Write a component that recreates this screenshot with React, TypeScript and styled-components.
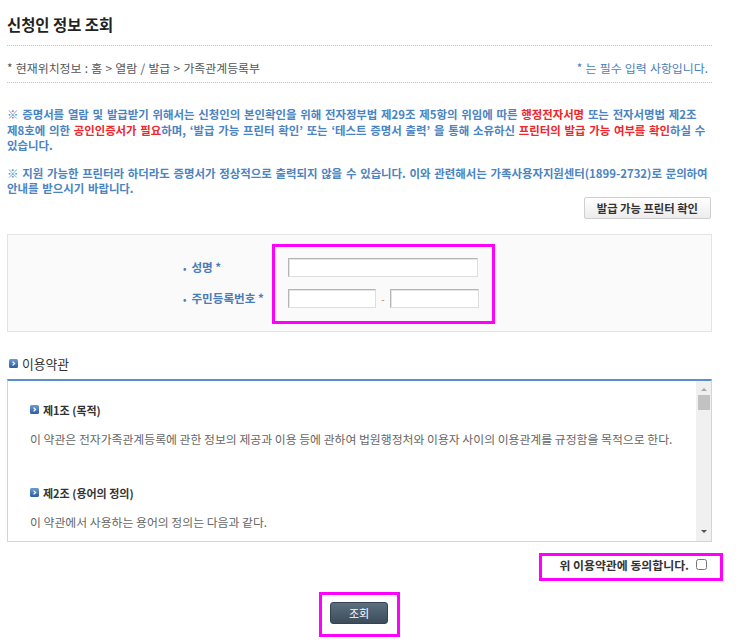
import React from 'react';
import styled, { createGlobalStyle } from 'styled-components';

const GlobalStyle = createGlobalStyle`
  body {
    margin: 0;
    background: #fff;
    font-family: "Noto Sans CJK KR", "Noto Sans", sans-serif;
    color: #333;
  }
`;

const Page = styled.div`
  width: 705px;
  padding: 14px 0 4px 7px;
`;

const Title = styled.h1`
  margin: 0;
  padding-bottom: 11px;
  border-bottom: 1px dotted #c4c4c4;
  font-size: 15.4px;
  line-height: 20px;
  font-weight: 700;
  color: #222;
`;

const LocationBar = styled.div`
  display: flex;
  justify-content: space-between;
  padding: 14px 4px 6px 0;
  border-bottom: 1px dotted #c4c4c4;
  font-size: 11.9px;
  line-height: 16px;
  color: #555;
  word-spacing: 0.6px;
`;

const RequiredNote = styled.span`
  color: #4a7db8;
`;

const Notice = styled.p<{ $gap: number }>`
  margin: ${({ $gap }) => $gap}px 0 0;
  font-size: 11.4px;
  line-height: 15.5px;
  font-weight: 700;
  color: #4a84c2;
  white-space: nowrap;
  word-spacing: 1.2px;
`;

const Red = styled.span`
  color: #f0262b;
`;

const ButtonRow = styled.div`
  display: flex;
  justify-content: flex-end;
  padding-right: 1px;
`;

const GrayButton = styled.button`
  height: 22px;
  padding: 0 12px;
  border: 1px solid #cfcfcf;
  border-radius: 2px;
  background: linear-gradient(#ffffff, #ececec);
  font-family: inherit;
  font-size: 11.3px;
  font-weight: 700;
  color: #333;
  cursor: pointer;
`;

const FormBox = styled.div`
  display: flex;
  margin-top: 15px;
  padding: 9px 0 7px 173px;
  border: 1px solid #e3e3e3;
  background: #fafafa;
`;

const LabelColumn = styled.div`
  display: flex;
  flex-direction: column;
  gap: 12px;
  width: 91px;
  padding-top: 14px;
`;

const FieldLabel = styled.label`
  height: 19px;
  font-size: 11.6px;
  line-height: 19px;
  font-weight: 700;
  color: #4a7db8;
  white-space: nowrap;

  &::before {
    content: '•';
    margin: 0 5px 0 2px;
    font-size: 9px;
  }
`;

const Highlight = styled.div`
  border: 3px solid #ff00ff;
`;

const FieldStack = styled(Highlight)`
  display: flex;
  flex-direction: column;
  gap: 12px;
  padding: 11px 13px 13px;
`;

const FieldRow = styled.div`
  display: flex;
  align-items: center;
  width: 191px;
`;

const TextInput = styled.input<{ $width: number }>`
  box-sizing: border-box;
  width: ${({ $width }) => $width}px;
  height: 19px;
  padding: 0 3px;
  border: 1px solid #b5b5b5;
  border-right-color: #dedede;
  border-bottom-color: #dedede;
  box-shadow: inset 1px 1px 0 #e4e4e4;
  background: #fff;
  font-family: inherit;
  font-size: 11px;
  outline: none;
`;

const Dash = styled.span`
  width: 14px;
  text-align: center;
  font-size: 10px;
  color: #c07a3a;
`;

const SectionHeading = styled.h2`
  display: flex;
  align-items: center;
  gap: 4px;
  margin: 24px 0 7px 2px;
  font-size: 12.8px;
  line-height: 16px;
  font-weight: 400;
  color: #333;
`;

const TermsBox = styled.div`
  display: flex;
  height: 163px;
  box-sizing: border-box;
  border: 1px solid #c4d8ec;
  border-top: 2px solid #5b8fcb;
`;

const TermsBody = styled.div`
  flex: 1;
  overflow: hidden;
  padding: 21px 0 0 22px;
`;

const ScrollTrack = styled.div`
  display: flex;
  flex-direction: column;
  align-items: center;
  width: 15px;
  background: #f0f0f0;
`;

const ScrollArrow = styled.span<{ $down?: boolean }>`
  width: 0;
  height: 0;
  margin: ${({ $down }) => ($down ? '0 0 8px' : '7px 0 4px')};
  border-left: 3px solid transparent;
  border-right: 3px solid transparent;
  ${({ $down }) =>
    $down ? 'border-top: 3px solid #505050;' : 'border-bottom: 3px solid #a8a8a8;'}
`;

const ScrollThumb = styled.div`
  width: 12px;
  height: 15px;
  background: #c2c2c2;
`;

const ScrollSpace = styled.div`
  flex: 1;
`;

const Article = styled.div`
  margin-bottom: 38px;
`;

const ArticleTitle = styled.h3`
  display: flex;
  align-items: center;
  gap: 4px;
  margin: 0 0 13px;
  font-size: 11px;
  line-height: 16px;
  font-weight: 700;
  color: #333;
`;

const ArticleText = styled.p`
  margin: 0;
  font-size: 11.85px;
  line-height: 16px;
  color: #666;
  white-space: nowrap;
`;

const AgreeRow = styled.div`
  display: flex;
  justify-content: flex-end;
  margin: 11px -11px 0 0;
`;

const AgreeBox = styled(Highlight)`
  display: flex;
  align-items: center;
  gap: 7px;
  height: 18px;
  padding: 0 13px 4px 17px;
  font-size: 11.9px;
  font-weight: 700;
  color: #333;
`;

const CheckBox = styled.input`
  width: 11px;
  height: 11px;
  margin: 0;
`;

const SubmitRow = styled.div`
  display: flex;
  justify-content: center;
  margin-top: 11px;
`;

const SubmitBox = styled(Highlight)`
  padding: 7px 9px 10px 8px;
`;

const SubmitButton = styled.button`
  display: block;
  width: 58px;
  height: 22px;
  padding: 0;
  border: 1px solid #34434f;
  border-radius: 3px;
  background: linear-gradient(#5c6f7f, #3c4c5a);
  font-family: inherit;
  font-size: 11px;
  line-height: 20px;
  color: #fff;
  cursor: pointer;
`;

function BulletIcon() {
  return (
    <svg width="9" height="9" viewBox="0 0 9 9">
      <defs>
        <linearGradient id="bi" x1="0" y1="0" x2="0" y2="1">
          <stop offset="0" stopColor="#6a9ad6" />
          <stop offset="1" stopColor="#2c5e9e" />
        </linearGradient>
      </defs>
      <rect x="0" y="0" width="9" height="9" rx="1.5" fill="url(#bi)" />
      <path d="M3.6 2.6 L5.6 4.5 L3.6 6.4" fill="none" stroke="#fff" strokeWidth="1.3" />
    </svg>
  );
}

const articles = [
  {
    title: '제1조 (목적)',
    text: '이 약관은 전자가족관계등록에 관한 정보의 제공과 이용 등에 관하여 법원행정처와 이용자 사이의 이용관계를 규정함을 목적으로 한다.',
  },
  {
    title: '제2조 (용어의 정의)',
    text: '이 약관에서 사용하는 용어의 정의는 다음과 같다.',
  },
  {
    title: '제3조 (약관의 효력 및 변경)',
    text: '이 약관은 전자가족관계등록시스템 화면에 게시하거나 기타의 방법으로 이용자에게 공지함으로써 효력을 발생한다.',
  },
  {
    title: '제4조 (이용자의 의무)',
    text: '이용자는 이 약관 및 관계 법령에서 규정한 사항을 준수하여야 한다.',
  },
];

export default function App() {
  return (
    <Page>
      <GlobalStyle />
      <Title>신청인 정보 조회</Title>

      <LocationBar>
        <span>* 현재위치정보 : 홈 &gt; 열람 / 발급 &gt; 가족관계등록부</span>
        <RequiredNote>* 는 필수 입력 사항입니다.</RequiredNote>
      </LocationBar>

      <Notice $gap={24}>
        ※ 증명서를 열람 및 발급받기 위해서는 신청인의 본인확인을 위해 전자정부법 제29조 제5항의 위임에 따른 <Red>행정전자서명</Red> 또는 전자서명법 제2조
        <br />
        제8호에 의한 <Red>공인인증서가 필요</Red>하며, ‘발급 가능 프린터 확인’ 또는 ‘테스트 증명서 출력’ 을 통해 소유하신 <Red>프린터의 발급 가능 여부를 확인</Red>하실 수
        <br />
        있습니다.
      </Notice>

      <Notice $gap={12}>
        ※ 지원 가능한 프린터라 하더라도 증명서가 정상적으로 출력되지 않을 수 있습니다. 이와 관련해서는 가족사용자지원센터(1899-2732)로 문의하여
        <br />
        안내를 받으시기 바랍니다.
      </Notice>

      <ButtonRow>
        <GrayButton type="button">발급 가능 프린터 확인</GrayButton>
      </ButtonRow>

      <FormBox>
        <LabelColumn>
          <FieldLabel htmlFor="name">성명 *</FieldLabel>
          <FieldLabel htmlFor="rrn1">주민등록번호 *</FieldLabel>
        </LabelColumn>
        <FieldStack>
          <FieldRow>
            <TextInput id="name" $width={190} />
          </FieldRow>
          <FieldRow>
            <TextInput id="rrn1" $width={88} />
            <Dash>-</Dash>
            <TextInput id="rrn2" $width={89} />
          </FieldRow>
        </FieldStack>
      </FormBox>

      <SectionHeading>
        <BulletIcon />
        이용약관
      </SectionHeading>

      <TermsBox>
        <TermsBody>
          {articles.map((a) => (
            <Article key={a.title}>
              <ArticleTitle>
                <BulletIcon />
                {a.title}
              </ArticleTitle>
              <ArticleText>{a.text}</ArticleText>
            </Article>
          ))}
        </TermsBody>
        <ScrollTrack>
          <ScrollArrow />
          <ScrollThumb />
          <ScrollSpace />
          <ScrollArrow $down />
        </ScrollTrack>
      </TermsBox>

      <AgreeRow>
        <AgreeBox>
          <label htmlFor="agree">위 이용약관에 동의합니다.</label>
          <CheckBox id="agree" type="checkbox" />
        </AgreeBox>
      </AgreeRow>

      <SubmitRow>
        <SubmitBox>
          <SubmitButton type="button">조회</SubmitButton>
        </SubmitBox>
      </SubmitRow>
    </Page>
  );
}
